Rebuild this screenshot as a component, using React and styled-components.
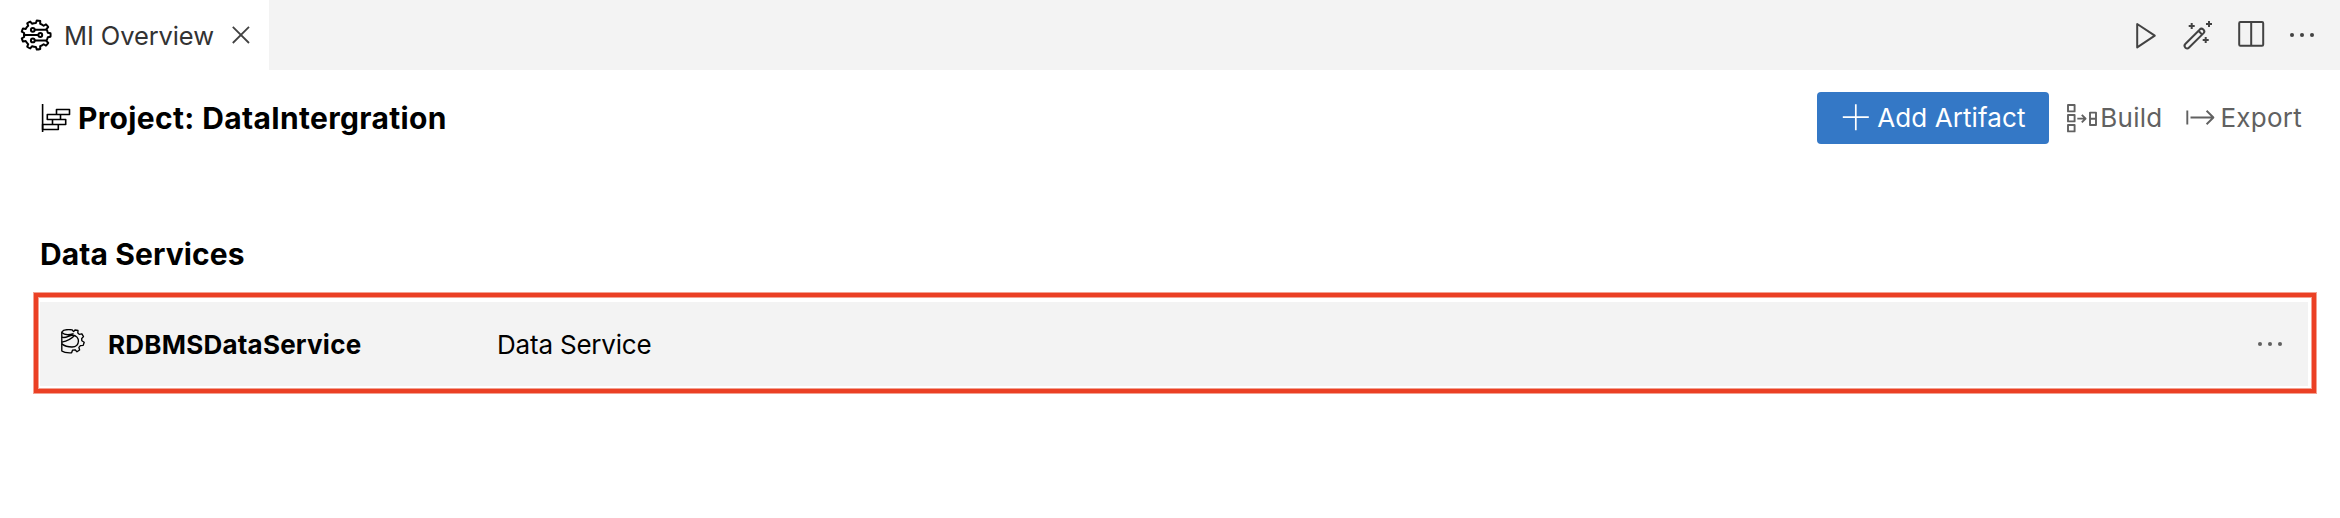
import React from 'react';
import styled, { createGlobalStyle } from 'styled-components';

const GlobalStyle = createGlobalStyle`
  * { box-sizing: border-box; }
  body {
    margin: 0;
    background: #ffffff;
    color: #000000;
    font-family: Inter, "Liberation Sans", sans-serif;
  }
`;

const Page = styled.div`
  display: flex;
  flex-direction: column;
  height: 518px;
`;

const TabBar = styled.div`
  display: flex;
  justify-content: space-between;
  height: 70px;
  background: #f3f3f3;
`;

const Tab = styled.div`
  display: flex;
  align-items: center;
  width: 269px;
  padding-left: 20px;
  background: #ffffff;
`;

const TabLabel = styled.span`
  width: 167px;
  margin: 1px 0 0 12px;
  font-size: 25.5px;
  letter-spacing: -0.1px;
  line-height: 32px;
  white-space: nowrap;
  color: #333333;
`;

const EditorActions = styled.div`
  display: flex;
  align-items: center;
  gap: 20px;
  padding-right: 22px;
`;

const IconButton = styled.button`
  display: flex;
  padding: 0;
  border: 0;
  background: none;
  color: ${(p) => p.$color || '#424242'};
`;

const Icon = styled.svg`
  display: block;
  flex: none;
  fill: none;
  stroke: currentColor;
  stroke-width: ${(p) => p.$stroke || 2};
  stroke-linejoin: round;
`;

const Content = styled.main`
  display: flex;
  flex-direction: column;
  padding: 22px 24px 0 34px;
`;

const Header = styled.header`
  display: flex;
  align-items: center;
  justify-content: space-between;
  height: 52px;
  padding: 0 14px 0 7px;
`;

const ProjectTitle = styled.h1`
  display: flex;
  align-items: center;
  gap: 7px;
  margin: 0;
  font-size: 30px;
  font-weight: 700;
  letter-spacing: 0.34px;
  line-height: 36px;
  white-space: nowrap;
`;

const HeaderActions = styled.div`
  display: flex;
  align-items: center;
`;

const PrimaryButton = styled.button`
  display: flex;
  align-items: center;
  gap: 7px;
  width: 232px;
  height: 52px;
  padding: 0 0 0 25px;
  border: 0;
  border-radius: 4px;
  background: #3478c6;
  color: #ffffff;
  font: 400 26px/32px Inter, "Liberation Sans", sans-serif;
  letter-spacing: 0.08px;
  white-space: nowrap;
`;

const TextButton = styled.button`
  display: flex;
  align-items: center;
  gap: ${(p) => p.$gap}px;
  margin-left: ${(p) => p.$offset}px;
  padding: 0;
  border: 0;
  background: none;
  color: #616161;
  font: 400 26px/32px Inter, "Liberation Sans", sans-serif;
  letter-spacing: 0.25px;
`;

const SectionTitle = styled.h2`
  margin: 92px 0 21px 6px;
  font-size: 30px;
  font-weight: 700;
  letter-spacing: 0.1px;
  line-height: 36px;
`;

const Highlight = styled.section`
  height: 100px;
  padding: 5px 4px 3px 2px;
  border: 4px solid #eb4024;
  box-shadow: 0 0 0 1px #f3a192, inset 0 0 0 1px #f3a192;
`;

const ServiceRow = styled.div`
  display: flex;
  align-items: center;
  height: 84px;
  padding: 0 22px 0 21px;
  background: #f3f3f3;
`;

const ServiceIcon = styled.span`
  width: 47px;
  margin-top: -6px;
`;

const ServiceName = styled.span`
  width: 389px;
  padding-top: 2px;
  font-size: 26px;
  font-weight: 700;
  letter-spacing: 0.22px;
  line-height: 32px;
`;

const ServiceType = styled.span`
  flex: 1;
  padding-top: 2px;
  font-size: 26px;
  letter-spacing: -0.2px;
  line-height: 32px;
`;

// Closed outline of a cog whose first tooth points right.
function cogPath(cx, cy, outer, inner, teeth) {
  const step = (Math.PI * 2) / teeth;
  const at = (r, a) => `${(cx + r * Math.cos(a)).toFixed(2)} ${(cy + r * Math.sin(a)).toFixed(2)}`;
  let d = '';
  for (let i = 0; i < teeth; i += 1) {
    const a = i * step;
    d += `${i ? 'L' : 'M'}${at(inner, a - step * 0.26)}L${at(outer, a - step * 0.17)}`;
    d += `A${outer} ${outer} 0 0 1 ${at(outer, a + step * 0.17)}L${at(inner, a + step * 0.26)}`;
    d += `A${inner} ${inner} 0 0 1 ${at(inner, a + step * 0.74)}`;
  }
  return `${d}Z`;
}

const IntegrationIcon = () => (
  <Icon width="32" height="32" viewBox="0 0 32 32" color="#000000" $stroke={2}>
    <path d={cogPath(16, 16, 14.6, 12, 9)} />
    <path d="M15 10.8H26.5M3.5 16H18M15 21.4H26.5" />
    <circle cx="12.8" cy="10.8" r="1.9" />
    <circle cx="20.3" cy="16" r="1.9" />
    <circle cx="12.8" cy="21.4" r="1.9" />
  </Icon>
);

const CloseIcon = () => (
  <Icon width="20" height="20" viewBox="0 0 20 20" $stroke={1.8}>
    <path d="M1.8 1.8L18 18M18 1.8L1.8 18" />
  </Icon>
);

const RunIcon = () => (
  <Icon width="32" height="32" viewBox="0 0 32 32">
    <path d="M7.2 5V28.4L24.8 16.7Z" />
  </Icon>
);

const WandIcon = () => (
  <Icon width="32" height="32" viewBox="0 0 32 32">
    <path d="M3.3 25L17.6 10.7A2.4 2.4 0 0 1 21.6 14.1L7.1 28.5A2.45 2.45 0 0 1 3.3 25ZM16.5 11.8L20.1 15.6" />
    <path d="M9.7 4V10M6.7 7H12.7M27 2V8M24 5H30M23.7 18V24M20.7 21H26.7" />
  </Icon>
);

const SplitIcon = () => (
  <Icon width="32" height="32" viewBox="0 0 32 32">
    <rect x="5.2" y="3" width="24" height="23.8" rx="1.2" />
    <path d="M17.2 3V26.8" />
  </Icon>
);

const MoreIcon = () => (
  <Icon width="32" height="32" viewBox="0 0 32 32">
    <g fill="currentColor" stroke="none">
      <circle cx="6" cy="16" r="2.05" />
      <circle cx="16" cy="16" r="2.05" />
      <circle cx="26" cy="16" r="2.05" />
    </g>
  </Icon>
);

const ProjectIcon = () => (
  <Icon width="30" height="30" viewBox="0 0 30 30" $stroke={1.6}>
    <path d="M1.6 1V29" />
    <path d="M15.5 6.5H28.5V11.5H15.5ZM6.3 11.5H19.5V16.5H6.3ZM11.5 16.5H24.7V21.5H11.5ZM1.6 21.5H17.3V26.5H1.6Z" />
  </Icon>
);

const AddIcon = () => (
  <Icon width="28" height="28" viewBox="0 0 28 28" $stroke={1.7}>
    <path d="M13.8 0.2V26.2M0.8 13.2H26.8" />
  </Icon>
);

const BuildIcon = () => (
  <Icon width="32" height="30" viewBox="0 0 32 30" $stroke={1.9}>
    <path d="M2 2H8.6V8.4H2ZM2 12H8.6V18.4H2ZM2 22H8.6V28.4H2Z" />
    <path d="M11.3 15.6H19.3M15.8 11.8L19.6 15.6L15.8 19.4M24 9.6H30V22H24ZM24 15.8H30" />
  </Icon>
);

const ExportIcon = () => (
  <Icon width="30" height="20" viewBox="0 0 30 20" $stroke={1.9}>
    <path d="M1.3 2.5V16.5M4.5 9.5H27.5M20.6 2.8L27.4 9.5L20.6 16.2" />
  </Icon>
);

const DataServiceIcon = () => (
  <Icon width="25" height="25" viewBox="0 0 25 25" $stroke={1.35}>
    <path d="M0.8 3V22C3 23.6 7 24 10.6 23.8L11.5 21.2L14 20.8L16 22.8L18.6 21L17.9 18.4L19.4 16.6L22.2 16.4L23.2 13.2L20.8 11.7L20.7 9.5L22.5 7.6L20.9 4.8L18.2 5.3L16.8 4.1L17 1.5L14 1L12.6 2.6L11 0.8C6.5 0.3 2 1 0.8 3Z" />
    <path d="M0.8 3.6C3.5 6.2 8 6.2 12.6 4.6M0.8 13.2C5.5 12.2 10.5 9.8 13.8 6.2M0.8 8.2C5 9.8 8 6.2 11.5 6.2C19.5 6.3 19.5 18 11 18C7 18 3.5 17 0.8 14.9" />
  </Icon>
);

export default function App() {
  return (
    <Page>
      <GlobalStyle />
      <TabBar>
        <Tab>
          <IntegrationIcon />
          <TabLabel>MI Overview</TabLabel>
          <IconButton aria-label="Close">
            <CloseIcon />
          </IconButton>
        </Tab>
        <EditorActions>
          <IconButton aria-label="Run"><RunIcon /></IconButton>
          <IconButton aria-label="Generate"><WandIcon /></IconButton>
          <IconButton aria-label="Split editor"><SplitIcon /></IconButton>
          <IconButton aria-label="More actions"><MoreIcon /></IconButton>
        </EditorActions>
      </TabBar>
      <Content>
        <Header>
          <ProjectTitle>
            <ProjectIcon />
            Project: DataIntergration
          </ProjectTitle>
          <HeaderActions>
            <PrimaryButton>
              <AddIcon />
              Add Artifact
            </PrimaryButton>
            <TextButton $offset={17} $gap={2}>
              <BuildIcon />
              Build
            </TextButton>
            <TextButton $offset={24} $gap={4}>
              <ExportIcon />
              Export
            </TextButton>
          </HeaderActions>
        </Header>
        <SectionTitle>Data Services</SectionTitle>
        <Highlight>
          <ServiceRow>
            <ServiceIcon>
              <DataServiceIcon />
            </ServiceIcon>
            <ServiceName>RDBMSDataService</ServiceName>
            <ServiceType>Data Service</ServiceType>
            <IconButton aria-label="Service actions" $color="#616161">
              <MoreIcon />
            </IconButton>
          </ServiceRow>
        </Highlight>
      </Content>
    </Page>
  );
}
